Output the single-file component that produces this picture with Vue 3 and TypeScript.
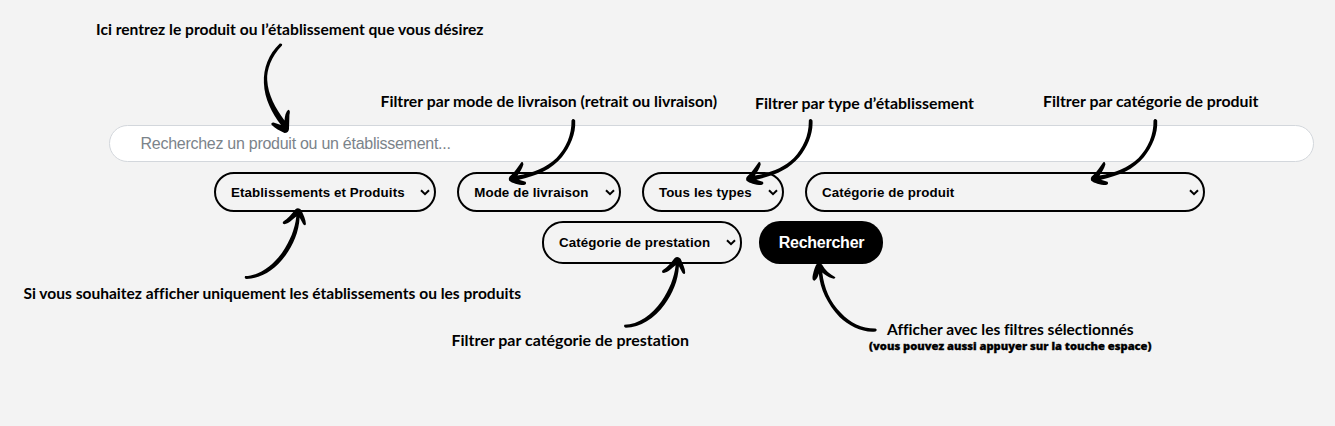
<script setup lang="ts">
interface Filter { label: string; width: number }
interface Note { text: string; x: number; y: number; width: number; small?: boolean }

const filters: Filter[] = [
  { label: 'Etablissements et Produits', width: 222 },
  { label: 'Mode de livraison', width: 163.5 },
  { label: 'Tous les types', width: 142 },
  { label: 'Catégorie de produit', width: 399.5 },
]

const notes: Note[] = [
  { text: 'Ici rentrez le produit ou l’établissement que vous désirez', x: 96, y: 35, width: 387.5 },
  { text: 'Filtrer par mode de livraison (retrait ou livraison)', x: 380.5, y: 107, width: 336.5 },
  { text: 'Filtrer par type d’établissement', x: 755, y: 109, width: 219 },
  { text: 'Filtrer par catégorie de produit', x: 1043, y: 107, width: 215.5 },
  { text: 'Si vous souhaitez afficher uniquement les établissements ou les produits', x: 23.5, y: 299, width: 497.5 },
  { text: 'Filtrer par catégorie de prestation', x: 451.5, y: 346, width: 237.5 },
  { text: 'Afficher avec les filtres sélectionnés', x: 887, y: 335, width: 246.5 },
  { text: '(vous pouvez aussi appuyer sur la touche espace)', x: 869, y: 350, width: 282.5, small: true },
]

const sideArrows = [0, 237.3, 582]
const upArrows = ['translate(0 0)', 'translate(379.3 48.7)']
</script>

<template>
  <main class="page">
    <form class="search" @submit.prevent>
      <input class="query" type="text" placeholder="Recherchez un produit ou un établissement..." />
      <div class="row first">
        <div v-for="f in filters" :key="f.label" class="filter" :style="{ width: f.width + 'px' }">
          <span>{{ f.label }}</span>
          <svg class="chevron" viewBox="0 0 10 7"><path d="M1 1.2 5 5.2 9 1.2" /></svg>
        </div>
      </div>
      <div class="row second">
        <div class="filter tall">
          <span>Catégorie de prestation</span>
          <svg class="chevron" viewBox="0 0 10 7"><path d="M1 1.2 5 5.2 9 1.2" /></svg>
        </div>
        <button class="submit" type="submit">Rechercher</button>
      </div>
    </form>

    <svg class="notes" viewBox="0 0 1335 426">
      <path d="M279.8 43.4Q282.8 43.2 282 45.5C271 57 266.7 70 267.2 80C268 95 275.5 108 284.5 120.5Q285.2 112 288.3 109.8Q290.7 110 289.4 115L289 129Q288.5 132.8 284.5 133C280 131 275 128.5 271.5 124.8Q270.9 122.5 273.5 122.6L281 125C272 113 264.5 99 263.9 83C263.3 68 268.5 54 279.8 43.4Z" />
      <path
        v-for="dx in sideArrows"
        :key="dx"
        :transform="`translate(${dx} 0)`"
        d="M571.5 120.5Q573 117.7 575.2 120.5C576 134 570 147 562 157C551 170 538 175 519 179.7L525.5 181.8Q527.2 184.2 524 185C518 185 512 183 509.2 180.7Q508 177.5 510.5 175.7C515 172 518 167 521.3 162.3Q523.2 161.2 523.4 164.4C522 169 519.8 172 517.5 175.5C533 173 546 168 556.5 158C566 148 571.8 135 571.5 120.5Z"
      />
      <path
        v-for="move in upArrows"
        :key="move"
        :transform="move"
        d="M245.2 276.1C259 276 273 265.5 282.2 252.5C290 241 295 229 296.3 216.5C292 220 288.5 223.5 284.5 224.2Q281.7 224 283.3 221.5C288 218.5 292 214 295.2 209.5Q298.3 207 301.3 210C303.5 215 306 220 305.9 224Q305.3 226.5 303.2 224.2L299.6 217.5C299 232 293 245 285.5 255.5C275 270 261 278.5 246.5 279.1Q243.8 278.3 245.2 276.1Z"
      />
      <path d="M875.3 328.4Q878 329.5 875.5 331.6C863 333 849 326 839.5 317C827.5 304 820 289 818.8 273.5Q817.5 279 814.5 280.7Q811.5 280.5 812.8 275C814 270 815 267 816.3 264.5Q819 261.5 822 264.5C825 270 830 274.5 835.4 277.2Q835 279.5 832 278.2C828 277 825 275 822.3 272.5C824 288 830 302 841 313C850 323 862 328.5 875.3 328.4Z" />
      <text
        v-for="n in notes"
        :key="n.text"
        :class="{ small: n.small }"
        :x="n.x"
        :y="n.y"
        :textLength="n.width"
        lengthAdjust="spacingAndGlyphs"
      >{{ n.text }}</text>
    </svg>
  </main>
</template>

<style>
body { background: #f3f3f3; }
</style>

<style scoped>
.page {
  position: relative;
  box-sizing: border-box;
  height: 426px;
  padding: 125px 21px 0 109px;
  overflow: hidden;
  background: #f3f3f3;
  font-family: "Liberation Sans", Arial, sans-serif;
}
.query {
  display: block;
  box-sizing: border-box;
  width: 1205px;
  height: 37px;
  padding: 0 30.5px;
  border: 1px solid #d3d7dc;
  border-radius: 19px;
  background: #fff;
  font: 16px "Liberation Sans", Arial, sans-serif;
  letter-spacing: -0.27px;
  outline: none;
}
.query::placeholder { color: #7b838a; opacity: 1; }
.row { display: flex; }
.first { gap: 21.2px; margin: 10px 0 0 105px; }
.second { gap: 17px; margin: 9px 0 0 433px; }
.filter {
  display: flex;
  align-items: center;
  justify-content: space-between;
  flex: none;
  box-sizing: border-box;
  height: 40px;
  padding: 0 4px 0 15px;
  border: 2px solid #000;
  border-radius: 20px;
  color: #000;
  font-size: 13.33px;
  font-weight: 700;
  letter-spacing: 0.1px;
  white-space: nowrap;
}
.filter.tall { width: 200px; height: 43px; border-radius: 21px; }
.chevron {
  width: 10px;
  height: 7px;
  fill: none;
  stroke: #000;
  stroke-width: 2;
}
.submit {
  width: 124px;
  height: 43px;
  padding: 0 0 0 1px;
  border: 0;
  border-radius: 21px;
  background: #000;
  color: #fff;
  font: 700 16px "Liberation Sans", Arial, sans-serif;
  letter-spacing: -0.25px;
}
.notes {
  position: absolute;
  top: 0;
  left: 0;
  width: 1335px;
  height: 426px;
  pointer-events: none;
}
.notes text {
  font: 700 14.6px Lato, "Open Sans", sans-serif;
  font-variant-ligatures: none;
}
.notes .small {
  font: 800 10.5px "Open Sans", sans-serif;
  stroke: #000;
  stroke-width: 0.3px;
}
</style>
